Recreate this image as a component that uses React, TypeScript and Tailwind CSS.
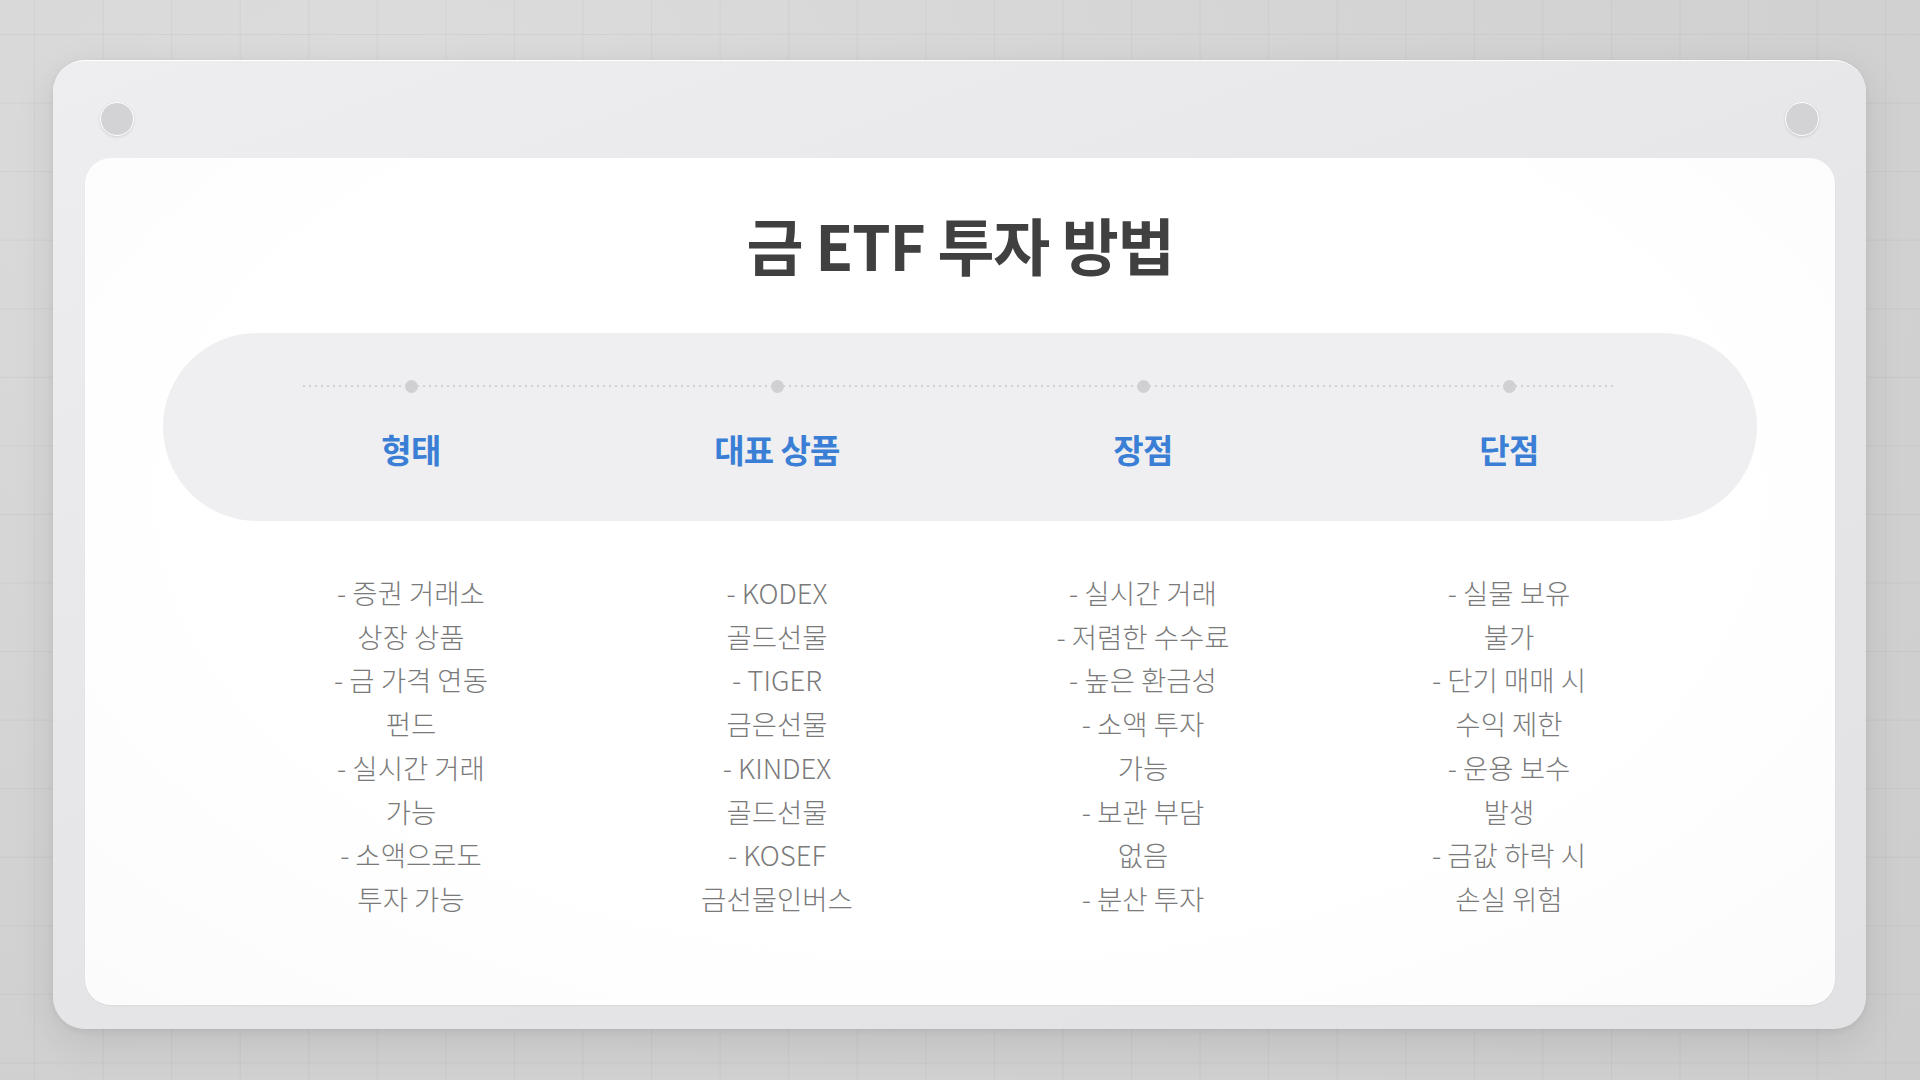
import React from "react";

const columns: { title: string; lines: string[] }[] = [
  {
    title: "형태",
    lines: ["- 증권 거래소", "상장 상품", "- 금 가격 연동", "펀드", "- 실시간 거래", "가능", "- 소액으로도", "투자 가능"],
  },
  {
    title: "대표 상품",
    lines: ["- KODEX", "골드선물", "- TIGER", "금은선물", "- KINDEX", "골드선물", "- KOSEF", "금선물인버스"],
  },
  {
    title: "장점",
    lines: ["- 실시간 거래", "- 저렴한 수수료", "- 높은 환금성", "- 소액 투자", "가능", "- 보관 부담", "없음", "- 분산 투자"],
  },
  {
    title: "단점",
    lines: ["- 실물 보유", "불가", "- 단기 매매 시", "수익 제한", "- 운용 보수", "발생", "- 금값 하락 시", "손실 위험"],
  },
];

function Screw({ side }: { side: "left" | "right" }) {
  return (
    <div
      className={
        "absolute top-[41px] h-[34px] w-[34px] rounded-full border border-white bg-[#d3d3d5] shadow-[0_1px_3px_rgba(0,0,0,0.12)] " +
        (side === "left" ? "left-[47px]" : "right-[47px]")
      }
    />
  );
}

export default function App() {
  return (
    <div className="h-[1080px] w-[1920px] overflow-hidden bg-[radial-gradient(ellipse_at_20%_10%,#dcdcdc_0%,#d2d2d2_60%,#cdcdcd_100%)] [font-family:'Noto_Sans_CJK_KR','Noto_Sans',sans-serif]">
      <div className="h-full w-full bg-[linear-gradient(to_right,rgba(0,0,0,0.04)_1px,transparent_1px),linear-gradient(to_bottom,rgba(0,0,0,0.04)_1px,transparent_1px)] [background-size:68.57px_68.57px] [background-position:34px_34px] pl-[53px] pt-[60px]">
        <div className="relative h-[969px] w-[1813px] rounded-[32px] border-t border-white bg-[linear-gradient(160deg,#eeeef0_0%,#e6e6e8_50%,#e2e2e4_100%)] pl-[32px] pt-[97px] shadow-[0_12px_40px_rgba(0,0,0,0.10),0_2px_6px_rgba(0,0,0,0.06)]">
          <Screw side="left" />
          <Screw side="right" />
          <div className="flex h-[847px] w-[1750px] flex-col items-center rounded-[26px] bg-[radial-gradient(ellipse_at_50%_40%,#ffffff_60%,#fbfbfb_100%)] pt-[50px] shadow-[0_1px_2px_rgba(0,0,0,0.05)]">
            <h1 className="text-[62px] font-bold leading-[72px] tracking-[-0.02em] text-[#404040]">
              금 ETF 투자 방법
            </h1>
            <div className="relative mt-[53px] h-[188px] w-[1594px] rounded-full bg-[#efeff1]">
              <div className="absolute left-[140px] right-[140px] top-[52px] h-[2px] bg-[linear-gradient(to_right,#d2d2d4_2px,transparent_2px)] [background-size:6px_2px]" />
              <div className="relative mx-auto grid w-[1464px] grid-cols-4">
                {columns.map((c) => (
                  <div key={c.title} className="flex flex-col items-center pt-[47px]">
                    <div className="h-[13px] w-[13px] rounded-full bg-[#d0d0d2]" />
                    <div className="mt-[36px] text-[33px] font-bold leading-[40px] tracking-[-0.02em] text-[#3a7fd5]">
                      {c.title}
                    </div>
                  </div>
                ))}
              </div>
            </div>
            <div className="mt-[50px] grid w-[1464px] grid-cols-4">
              {columns.map((c) => (
                <div key={c.title} className="flex flex-col items-center">
                  {c.lines.map((l, i) => (
                    <div key={i} className="whitespace-pre text-[27.5px] font-light leading-[43.7px] text-[#7a7a7a]">
                      {l}
                    </div>
                  ))}
                </div>
              ))}
            </div>
          </div>
        </div>
      </div>
    </div>
  );
}
